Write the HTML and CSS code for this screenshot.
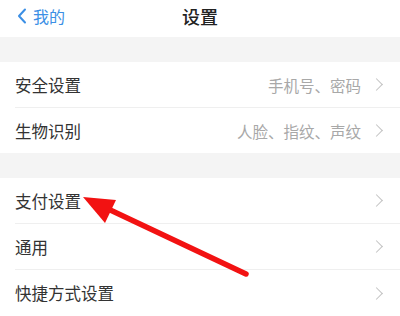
FILE: index.html
```html
<!DOCTYPE html>
<html lang="zh-CN">
<head>
<meta charset="utf-8">
<link rel="stylesheet" href="styles.css">
</head>
<body>
<div class="page">
  <header class="nav">
    <div class="back">
      <svg class="back-icon" width="10" height="16" viewBox="0 0 10 16"><path d="M8 1.5 L2 8 L8 14.5" fill="none" stroke="#3b8fe5" stroke-width="2" stroke-linecap="round" stroke-linejoin="round"/></svg>
      <span>我的</span>
    </div>
    <div class="title">设置</div>
  </header>
  <div class="gap"></div>
  <section class="group">
    <div class="row"><span class="label">安全设置</span><span class="value">手机号、密码</span><span class="chev"></span></div>
    <div class="row"><span class="label">生物识别</span><span class="value">人脸、指纹、声纹</span><span class="chev"></span></div>
  </section>
  <div class="gap"></div>
  <section class="group">
    <div class="row"><span class="label">支付设置</span><span class="value"></span><span class="chev"></span></div>
    <div class="row"><span class="label">通用</span><span class="value"></span><span class="chev"></span></div>
    <div class="row last"><span class="label">快捷方式设置</span><span class="value"></span><span class="chev"></span></div>
  </section>
  <svg class="arrow" width="400" height="316" viewBox="0 0 400 316">
    <line x1="106" y1="208" x2="246" y2="274" stroke="#f21212" stroke-width="5.5" stroke-linecap="round"/>
    <polygon points="83,197 116,200 105,223" fill="#f21212"/>
  </svg>
</div>
</body>
</html>
```

FILE: styles.css
```css
html, body {
  margin: 0;
  padding: 0;
  background: #fff;
}
body {
  font-family: "Noto Sans CJK SC", "Noto Sans", sans-serif;
  color: #333;
}
.page {
  position: relative;
  width: 400px;
  height: 316px;
  overflow: hidden;
}
.nav {
  height: 37px;
  display: flex;
  align-items: center;
  justify-content: center;
  position: relative;
  background: #fff;
}
.back {
  position: absolute;
  left: 17px;
  top: 0;
  height: 32px;
  display: flex;
  align-items: center;
  gap: 6px;
  color: #3b8fe5;
  font-size: 16px;
}
.title {
  font-size: 18px;
  font-weight: 500;
  color: #222;
  margin-top: -5px;
}
.gap {
  height: 25px;
  background: #f4f4f4;
}
.group {
  background: #fff;
}
.row {
  height: 45px;
  display: flex;
  align-items: center;
  margin-left: 15px;
  padding-right: 16px;
  border-bottom: 1px solid #efefef;
}
.group .row:last-child {
  border-bottom: none;
}
.row.last {
  height: 46px;
}
.label {
  font-size: 16.5px;
  color: #333;
  flex: 1;
}
.value {
  font-size: 15.5px;
  color: #a8a8a8;
  margin-right: 11px;
}
.chev {
  width: 8px;
  height: 8px;
  border-top: 1.5px solid #c2c2c2;
  border-right: 1.5px solid #c2c2c2;
  transform: rotate(45deg);
  margin-right: 3px;
}
.arrow {
  position: absolute;
  left: 0;
  top: 0;
  pointer-events: none;
}
```
